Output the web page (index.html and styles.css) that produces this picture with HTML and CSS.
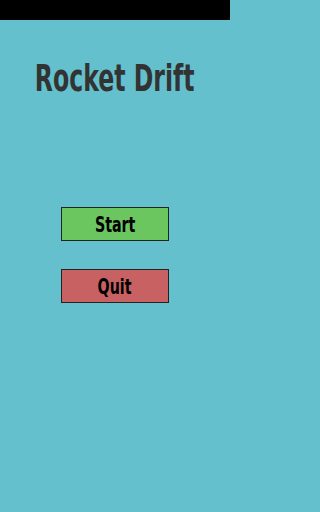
FILE: index.html
```html
<!DOCTYPE html>
<html>
<head>
<meta charset="utf-8">
<link rel="stylesheet" href="styles.css">
</head>
<body>
<div class="status-bar"></div>
<main class="menu">
  <h1 class="title"><span class="narrow">Rocket Drift</span></h1>
  <div class="buttons">
    <button class="btn btn-start"><span class="narrow-btn">Start</span></button>
    <button class="btn btn-quit"><span class="narrow-btn">Quit</span></button>
  </div>
</main>
</body>
</html>
```
FILE: styles.css
```css
html {
  background: #63c0cc;
}
html, body {
  margin: 0;
  padding: 0;
  height: 100%;
}
body {
  width: 230px;
  background: #63c0cc;
  font-family: "DejaVu Sans Condensed", "Liberation Sans", sans-serif;
}
.status-bar {
  height: 20px;
  background: #000;
}
.menu {
  display: flex;
  flex-direction: column;
  align-items: center;
}
.title {
  margin: 39px 0 0;
  font-size: 38px;
  line-height: 39px;
  font-weight: bold;
  color: #333333;
  white-space: nowrap;
}
.narrow {
  display: inline-block;
  transform: scaleX(0.69);
}
.buttons {
  margin-top: 109px;
  display: flex;
  flex-direction: column;
  gap: 28px;
}
.btn {
  box-sizing: border-box;
  width: 108px;
  height: 34px;
  border: 1px solid #222;
  font-family: inherit;
  font-size: 22px;
  font-weight: bold;
  line-height: 32px;
  padding: 1px 0 0;
  color: #000;
  margin: 0;
}
.narrow-btn {
  display: inline-block;
  transform: scaleX(0.72);
}
.btn-start {
  background: #6cc65f;
}
.btn-quit {
  background: #c86262;
}
```
